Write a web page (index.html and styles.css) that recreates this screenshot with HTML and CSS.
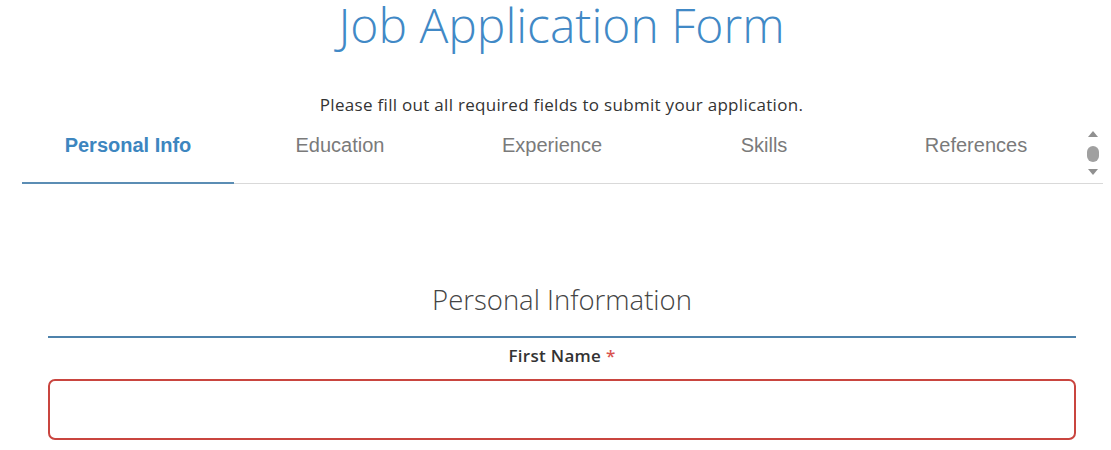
FILE: index.html
```html
<!DOCTYPE html>
<html lang="en">
<head>
<meta charset="utf-8">
<title>Job Application Form</title>
<link rel="stylesheet" href="styles.css">
</head>
<body>
<div class="page">
  <header class="header">
    <h1 class="title">Job Application Form</h1>
    <p class="subtitle">Please fill out all required fields to submit your application.</p>
  </header>
  <nav class="tabs">
    <div class="tab-list">
      <a class="tab tab-active">Personal Info</a>
      <a class="tab">Education</a>
      <a class="tab">Experience</a>
      <a class="tab">Skills</a>
      <a class="tab">References</a>
    </div>
    <div class="scrollbar" aria-hidden="true">
      <span class="arrow-up"></span>
      <span class="thumb"></span>
      <span class="arrow-down"></span>
    </div>
  </nav>
  <section class="section">
    <h2 class="section-title">Personal Information</h2>
    <div class="field">
      <label class="label" for="first">First Name <span class="req">*</span></label>
      <input class="input input-error" id="first" type="text">
    </div>
  </section>
</div>
</body>
</html>
```
FILE: styles.css
```css
* { box-sizing: border-box; }
html, body { margin: 0; padding: 0; background: #fff; }
body { font-family: "Open Sans", "Noto Sans", sans-serif; color: #333; }
.page { width: 1111px; }
.header { text-align: center; padding-left: 12px; }
.title {
  margin: 0;
  padding-top: 1px;
  font-size: 48px;
  line-height: 48px;
  font-weight: 300;
  color: #4189c6;
  letter-spacing: 0;
}
.subtitle {
  margin: 45px 0 0;
  font-size: 17px;
  line-height: 22px;
  letter-spacing: 0.3px;
  color: #333;
}
.tabs {
  display: flex;
  margin: 6px 8px 0 22px;
  border-bottom: 1px solid #d9d9d9;
  height: 62px;
}
.tab-list { display: flex; }
.tab {
  width: 212px;
  text-align: center;
  font-family: "Liberation Sans", Arial, sans-serif;
  font-size: 20px;
  line-height: 23px;
  padding-top: 12px;
  color: #7a7a7a;
}
.tab-active {
  color: #3d86bf;
  font-weight: bold;
  border-bottom: 2px solid #5b8db4;
  margin-bottom: -1px;
}
.scrollbar {
  width: 21px;
  display: flex;
  flex-direction: column;
  align-items: center;
  padding-top: 9px;
}
.arrow-up, .arrow-down {
  width: 0; height: 0;
  border-left: 5px solid transparent;
  border-right: 5px solid transparent;
}
.arrow-up { border-bottom: 6px solid #909090; }
.arrow-down { border-top: 6px solid #909090; margin-top: 7px; }
.thumb {
  width: 12px; height: 16px;
  margin-top: 9px;
  border-radius: 6px;
  background: #a0a0a0;
}
.section {
  width: 1028px;
  margin: 98px 0 0 48px;
}
.section-title {
  margin: 0;
  text-align: center;
  font-size: 27.5px;
  line-height: 36px;
  font-weight: 300;
  color: #444;
  padding-bottom: 18px;
  border-bottom: 2px solid #4e82ab;
}
.field { text-align: center; }
.label {
  display: block;
  margin-top: 7px;
  font-size: 17px;
  line-height: 22px;
  font-weight: 600;
  letter-spacing: 0.3px;
  color: #333;
}
.req { color: #d9534f; }
.input {
  display: block;
  width: 100%;
  height: 61px;
  margin-top: 12px;
  border-radius: 7px;
  border: 2px solid #ccc;
  background: #fff;
  font: inherit;
}
.input-error { border-color: #c9453f; }
```
